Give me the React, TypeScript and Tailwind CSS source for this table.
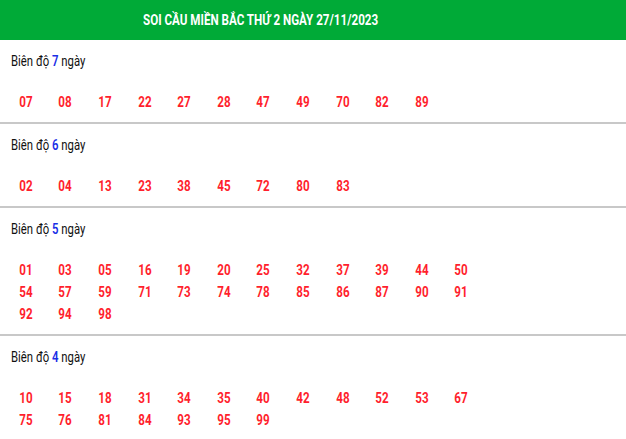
const sections: { days: number; nums: string[] }[] = [
  { days: 7, nums: ['07', '08', '17', '22', '27', '28', '47', '49', '70', '82', '89'] },
  { days: 6, nums: ['02', '04', '13', '23', '38', '45', '72', '80', '83'] },
  {
    days: 5,
    nums: [
      '01', '03', '05', '16', '19', '20', '25', '32', '37', '39', '44', '50',
      '54', '57', '59', '71', '73', '74', '78', '85', '86', '87', '90', '91',
      '92', '94', '98',
    ],
  },
  {
    days: 4,
    nums: [
      '10', '15', '18', '31', '34', '35', '40', '42', '48', '52', '53', '67',
      '75', '76', '81', '84', '93', '95', '99',
    ],
  },
];

export default function App() {
  return (
    <div className="min-h-screen w-[626px] bg-white font-['Roboto',sans-serif]">
      <div className="flex h-10 items-center bg-[#00aa37] pl-[143px]">
        <h1 className="inline-block origin-left scale-x-[0.83] text-[14px] font-bold whitespace-nowrap text-white">
          SOI CẦU MIỀN BẮC THỨ 2 NGÀY 27/11/2023
        </h1>
      </div>

      {sections.map((s, i) => (
        <div
          key={s.days}
          className={`pt-[11px] pb-[9px] ${i < sections.length - 1 ? 'border-b-2 border-[#c8c8c8]' : ''}`}
        >
          <p className="h-5 pl-[11px] text-[14px] leading-5 text-[#111]">
            <span className="inline-block origin-left scale-x-[0.81] whitespace-nowrap">
              Biên độ <span className="font-semibold text-[#1a2fe6]">{s.days}</span> ngày
            </span>
          </p>
          <div className="mt-5 flex w-[490px] flex-wrap pl-[6px] text-[14px] leading-[22px] font-bold text-[#ff1f2d]">
            {s.nums.map((n) => (
              <span key={n} className="h-[22px] w-[39.6px] text-center">
                <span className="inline-block scale-x-[0.83]">{n}</span>
              </span>
            ))}
          </div>
        </div>
      ))}
    </div>
  );
}
